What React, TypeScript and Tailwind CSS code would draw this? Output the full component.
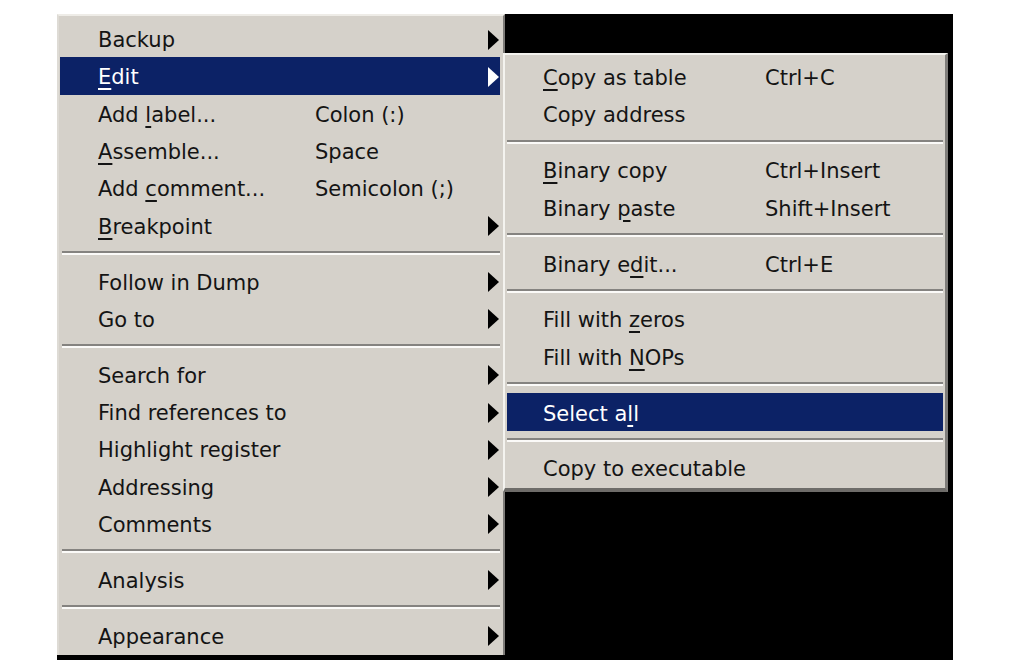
import React from "react";

type Item =
  | { sep: true }
  | {
      sep?: false;
      label: React.ReactNode;
      shortcut?: string;
      sub?: boolean;
      active?: boolean;
    };

// underline the mnemonic letter, the way Windows menus do
const U = ({ children }: { children: React.ReactNode }) => (
  <span className="underline decoration-2 underline-offset-[4px]">{children}</span>
);

const Arrow = ({ white }: { white?: boolean }) => (
  <svg width="11" height="20" viewBox="0 0 11 20" className="shrink-0 -mt-[2px]">
    <path d="M0 0 L11 10 L0 20 Z" fill={white ? "#ffffff" : "#000000"} />
  </svg>
);

const mainItems: Item[] = [
  { label: "Backup", sub: true },
  { label: <><U>E</U>dit</>, sub: true, active: true },
  { label: <>Add <U>l</U>abel...</>, shortcut: "Colon (:)" },
  { label: <><U>A</U>ssemble...</>, shortcut: "Space" },
  { label: <>Add <U>c</U>omment...</>, shortcut: "Semicolon (;)" },
  { label: <><U>B</U>reakpoint</>, sub: true },
  { sep: true },
  { label: "Follow in Dump", sub: true },
  { label: "Go to", sub: true },
  { sep: true },
  { label: "Search for", sub: true },
  { label: "Find references to", sub: true },
  { label: "Highlight register", sub: true },
  { label: "Addressing", sub: true },
  { label: "Comments", sub: true },
  { sep: true },
  { label: "Analysis", sub: true },
  { sep: true },
  { label: "Appearance", sub: true },
];

const editItems: Item[] = [
  { label: <><U>C</U>opy as table</>, shortcut: "Ctrl+C" },
  { label: "Copy address" },
  { sep: true },
  { label: <><U>B</U>inary copy</>, shortcut: "Ctrl+Insert" },
  { label: <>Binary <U>p</U>aste</>, shortcut: "Shift+Insert" },
  { sep: true },
  { label: <>Binary e<U>d</U>it...</>, shortcut: "Ctrl+E" },
  { sep: true },
  { label: <>Fill with <U>z</U>eros</> },
  { label: <>Fill with <U>N</U>OPs</> },
  { sep: true },
  { label: <>Select a<U>l</U>l</>, active: true },
  { sep: true },
  { label: "Copy to executable" },
];

const Menu = ({
  items,
  labelWidth,
  rowClass,
  sepClass,
}: {
  items: Item[];
  labelWidth: string;
  rowClass: string;
  sepClass: string;
}) => (
  <div className="flex flex-col">
    {items.map((it, i) =>
      it.sep ? (
        <div key={i} className={`h-[18.6px] flex flex-col pt-[7px] ${sepClass}`}>
          <div className="h-[2px] bg-[#858380]" />
          <div className="h-[2px] bg-[#fbfaf8]" />
        </div>
      ) : (
        <div
          key={i}
          className={`h-[37.3px] flex items-center pt-[4px] ${rowClass} ${
            it.active ? "bg-[#0c2266] text-white" : "text-[#141414]"
          }`}
        >
          <span className={`${labelWidth} shrink-0 whitespace-nowrap`}>{it.label}</span>
          <span className="flex-1 whitespace-nowrap">{it.shortcut}</span>
          {it.sub && <Arrow white={it.active} />}
        </div>
      )
    )}
  </div>
);

export default function App() {
  return (
    <div
      className="relative w-[1024px] h-[671px] bg-white overflow-hidden text-[21px] leading-none"
      style={{ fontFamily: '"DejaVu Sans", Verdana, sans-serif' }}
    >
      {/* the window behind the menus */}
      <div className="absolute left-[57px] top-[14px] w-[896px] h-[646px] bg-black" />

      {/* main context menu */}
      <div className="absolute left-[57px] top-[14px] w-[448px] h-[641px] bg-[#d5d1ca] border-t-2 border-l-2 border-t-[#eeece7] border-l-[#dedbd5] border-r-2 border-r-[#7d7b78] pt-[4px]">
        <Menu
          items={mainItems}
          labelWidth="w-[217px]"
          rowClass="ml-[1px] mr-[3px] pl-[38px] pr-[1px]"
          sepClass="ml-[3px] mr-[3px]"
        />
      </div>

      {/* Edit submenu */}
      <div className="absolute left-[503px] top-[53px] w-[445px] h-[439px] bg-[#d5d1ca] border-t-2 border-l-2 border-t-[#f4f3ef] border-l-[#f4f3ef] border-r-[3px] border-b-[4px] border-r-[#7f7d7a] border-b-[#6e6c69] pt-[3px]">
        <Menu
          items={editItems}
          labelWidth="w-[222px]"
          rowClass="ml-[2px] mr-[2px] pl-[36px] pr-[2px]"
          sepClass="ml-[2px] mr-[2px]"
        />
      </div>
    </div>
  );
}
